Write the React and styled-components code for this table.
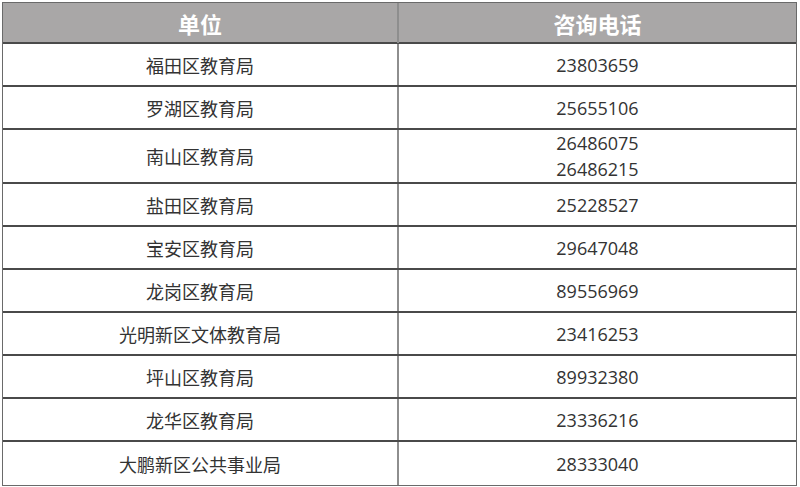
import React from 'react';
import styled, { createGlobalStyle } from 'styled-components';

const GlobalStyle = createGlobalStyle`
  body {
    margin: 0;
    background: #fff;
    font-family: "Noto Sans CJK SC", "Noto Sans", sans-serif;
  }
`;

const rows = [
  { unit: '福田区教育局', phones: ['23803659'] },
  { unit: '罗湖区教育局', phones: ['25655106'] },
  { unit: '南山区教育局', phones: ['26486075', '26486215'] },
  { unit: '盐田区教育局', phones: ['25228527'] },
  { unit: '宝安区教育局', phones: ['29647048'] },
  { unit: '龙岗区教育局', phones: ['89556969'] },
  { unit: '光明新区文体教育局', phones: ['23416253'] },
  { unit: '坪山区教育局', phones: ['89932380'] },
  { unit: '龙华区教育局', phones: ['23336216'] },
  { unit: '大鹏新区公共事业局', phones: ['28333040'] },
];

const Page = styled.div`
  padding: 2px 0 0 2px;
`;

const Sheet = styled.div`
  width: 795px;
  border: 1px solid #6a6a6a;
  box-sizing: border-box;
`;

const Row = styled.div`
  display: grid;
  grid-template-columns: 396px 1fr;
  height: ${(p) => p.$height}px;
  box-sizing: border-box;
  border-bottom: ${(p) => (p.$last ? 'none' : '2px solid #4a4a4a')};
  background: ${(p) => (p.$head ? '#a9a7a7' : '#fff')};
`;

const Cell = styled.div`
  display: flex;
  flex-direction: column;
  align-items: center;
  justify-content: center;
  border-right: ${(p) => (p.$first ? '2px solid #8e8e8e' : 'none')};
  color: ${(p) => (p.$head ? '#fff' : '#333')};
  font-size: ${(p) => (p.$head ? '22px' : '18px')};
  font-weight: ${(p) => (p.$head ? 700 : 400)};
  line-height: ${(p) => (p.$head ? '40px' : '26px')};
`;

const Phone = styled.span`
  font-family: "Open Sans", "Noto Sans", sans-serif;
  font-size: 18px;
  color: #333;
`;

export default function App() {
  return (
    <Page>
      <GlobalStyle />
      <Sheet>
        <Row $head $height={41}>
          <Cell $head $first>单位</Cell>
          <Cell $head>咨询电话</Cell>
        </Row>
        {rows.map((r, i) => (
          <Row
            key={r.unit}
            $height={r.phones.length > 1 ? 54 : 43}
            $last={i === rows.length - 1}
          >
            <Cell $first>{r.unit}</Cell>
            <Cell>
              {r.phones.map((p) => (
                <Phone key={p}>{p}</Phone>
              ))}
            </Cell>
          </Row>
        ))}
      </Sheet>
    </Page>
  );
}
